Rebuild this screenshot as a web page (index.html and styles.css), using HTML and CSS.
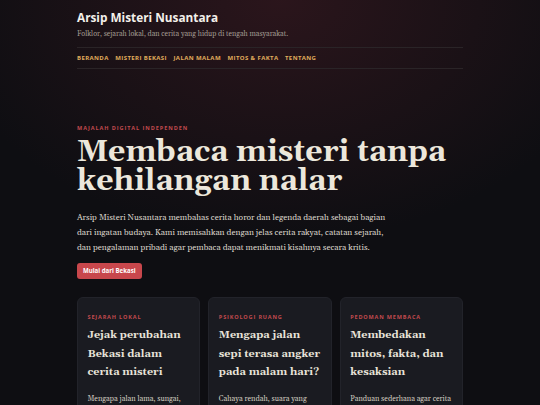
FILE: index.html
```html
<!DOCTYPE html>
<html lang="id">
<head>
<meta charset="utf-8">
<title>Arsip Misteri Nusantara</title>
<link rel="stylesheet" href="styles.css">
</head>
<body>
<div class="page">
  <header class="site-header">
    <div class="brand">Arsip Misteri Nusantara</div>
    <p class="tagline">Folklor, sejarah lokal, dan cerita yang hidup di tengah masyarakat.</p>
    <nav class="nav">
      <a href="#">Beranda</a>
      <a href="#">Misteri Bekasi</a>
      <a href="#">Jalan Malam</a>
      <a href="#">Mitos &amp; Fakta</a>
      <a href="#">Tentang</a>
    </nav>
  </header>
  <section class="hero">
    <div class="eyebrow">Majalah Digital Independen</div>
    <h1 class="hero-title">Membaca misteri tanpa kehilangan nalar</h1>
    <p class="hero-text">Arsip Misteri Nusantara membahas cerita horor dan legenda daerah sebagai bagian dari ingatan budaya. Kami memisahkan dengan jelas cerita rakyat, catatan sejarah, dan pengalaman pribadi agar pembaca dapat menikmati kisahnya secara kritis.</p>
    <a class="btn" href="#">Mulai dari Bekasi</a>
  </section>
  <section class="cards">
    <article class="card">
      <div class="card-label">Sejarah Lokal</div>
      <h2 class="card-title">Jejak perubahan Bekasi dalam cerita misteri</h2>
      <p class="card-text">Mengapa jalan lama, sungai, dan bangunan tua sering menjadi latar kisah.</p>
    </article>
    <article class="card">
      <div class="card-label">Psikologi Ruang</div>
      <h2 class="card-title">Mengapa jalan sepi terasa angker pada malam hari?</h2>
      <p class="card-text">Cahaya rendah, suara yang samar, dan imajinasi yang bekerja.</p>
    </article>
    <article class="card">
      <div class="card-label">Pedoman Membaca</div>
      <h2 class="card-title">Membedakan mitos, fakta, dan kesaksian</h2>
      <p class="card-text">Panduan sederhana agar cerita tetap dinikmati dengan kritis.</p>
    </article>
  </section>
</div>
</body>
</html>
```
FILE: styles.css
```css
html, body {
  margin: 0;
  padding: 0;
}
body {
  background-color: #0e0e12;
  background-image: radial-gradient(ellipse 340px 240px at 52% 0, rgba(62, 26, 34, 0.6), rgba(14, 14, 18, 0) 100%);
  background-repeat: no-repeat;
  min-height: 405px;
  font-family: Gelasio, Georgia, serif;
  color: #d8d2c8;
}
.page {
  width: 386px;
  margin: 0 auto;
}
.site-header {
  padding-top: 9px;
}
.brand {
  font-family: "Open Sans", sans-serif;
  font-weight: 700;
  font-size: 11.8px;
  line-height: 16px;
  color: #f3f0ea;
}
.tagline {
  margin: 4px 0 0;
  font-size: 7.2px;
  line-height: 10px;
  color: #a09a90;
}
.nav {
  margin-top: 8px;
  border-top: 1px solid #2a2427;
  border-bottom: 1px solid #2a2427;
  display: flex;
  gap: 6.5px;
  padding: 6px 0;
}
.nav a {
  font-family: "Open Sans", sans-serif;
  font-weight: 700;
  font-size: 6px;
  letter-spacing: 0.4px;
  text-transform: uppercase;
  color: #e0ad5c;
  text-decoration: none;
  line-height: 8px;
}
.hero {
  padding-top: 55px;
}
.eyebrow {
  font-family: "Open Sans", sans-serif;
  font-weight: 700;
  font-size: 5.5px;
  letter-spacing: 0.95px;
  text-transform: uppercase;
  color: #c24a4e;
  line-height: 8px;
}
.hero-title {
  margin: 6px 0 0;
  font-family: Gelasio, Georgia, serif;
  font-weight: 700;
  font-size: 30.4px;
  line-height: 29px;
  color: #ece7db;
}
.hero-text {
  margin: 14px 0 0;
  width: 316px;
  font-size: 8.4px;
  line-height: 15px;
  color: #d8d2c8;
}
.btn {
  display: inline-block;
  margin-top: 8px;
  background: #c8474c;
  color: #fff;
  font-family: "Open Sans", sans-serif;
  font-weight: 700;
  font-size: 6.1px;
  line-height: 16px;
  padding: 0 6px;
  border-radius: 3px;
  text-decoration: none;
}
.cards {
  margin-top: 18px;
  display: grid;
  grid-template-columns: repeat(3, 1fr);
  gap: 8px;
}
.card {
  background: #1a1b21;
  border: 1px solid #22232a;
  border-radius: 6px;
  padding: 15px 8px 10px 9.5px;
}
.card-label {
  font-family: "Open Sans", sans-serif;
  font-weight: 700;
  font-size: 5.5px;
  letter-spacing: 0.85px;
  text-transform: uppercase;
  color: #c24a4e;
  line-height: 8px;
}
.card-title {
  margin: 5px 0 0;
  font-family: Gelasio, Georgia, serif;
  font-weight: 700;
  font-size: 10.8px;
  line-height: 18.5px;
  color: #e8e3d9;
}
.card-text {
  margin: 11px 0 0;
  font-size: 7.4px;
  line-height: 12px;
  color: #cfc9bf;
}
```
